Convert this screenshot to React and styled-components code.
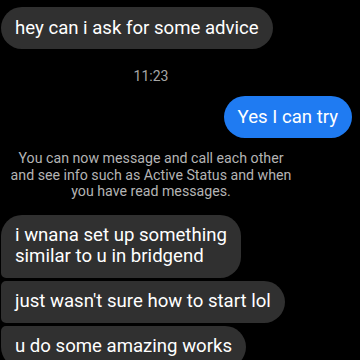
import React from 'react';
import styled, { createGlobalStyle } from 'styled-components';

const Global = createGlobalStyle`
  html, body {
    margin: 0;
    padding: 0;
    background: #000;
  }
  body {
    font-family: Roboto, "Noto Sans", Arial, sans-serif;
    -webkit-font-smoothing: antialiased;
  }
`;

const Screen = styled.div`
  width: 360px;
  height: 360px;
  overflow: hidden;
  background: #000;
  display: flex;
  flex-direction: column;
  padding: 7px 8px 0 1px;
  box-sizing: border-box;
`;

const Row = styled.div`
  display: flex;
  justify-content: ${p => (p.$mine ? 'flex-end' : 'flex-start')};
  margin-top: ${p => p.$gap || 0}px;
`;

const Bubble = styled.div`
  background: ${p => (p.$mine ? '#1f7bf2' : '#303030')};
  color: #fff;
  font-size: 18.6px;
  line-height: 21px;
  padding: 10.5px 14px;
  border-radius: ${p => p.$radius || '21px'};
  white-space: nowrap;
`;

const Centered = styled.div`
  width: 300px;
  text-align: center;
  color: ${p => p.$color || '#a8a8a8'};
  font-size: ${p => p.$size || 13}px;
  line-height: ${p => p.$line || 16}px;
  margin-top: ${p => p.$gap || 0}px;
`;

export default function App() {
  return (
    <>
      <Global />
      <Screen>
        <Row>
          <Bubble>hey can i ask for some advice</Bubble>
        </Row>
        <Centered $gap={19} $size={14} $color="#a6a6a6">11:23</Centered>
        <Row $mine $gap={12}>
          <Bubble $mine>Yes I can try</Bubble>
        </Row>
        <Centered $gap={12} $size={14.2} $line={16.5} $color="#b4b4b4">
          You can now message and call each other<br />
          and see info such as Active Status and when<br />
          you have read messages.
        </Centered>
        <Row $gap={15}>
          <Bubble $radius="21px 21px 21px 5px">i wnana set up something<br />similar to u in bridgend</Bubble>
        </Row>
        <Row $gap={3}>
          <Bubble $radius="5px 21px 21px 5px">just wasn't sure how to start lol</Bubble>
        </Row>
        <Row $gap={3}>
          <Bubble $radius="5px 21px 21px 21px">u do some amazing works</Bubble>
        </Row>
      </Screen>
    </>
  );
}
